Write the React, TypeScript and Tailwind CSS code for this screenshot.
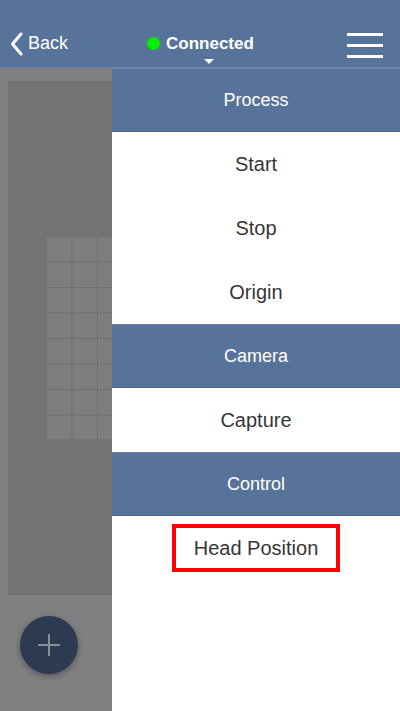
import React from "react";

const font = { fontFamily: '"Liberation Sans", Arial, sans-serif' };

function Header({ label }: { label: string }) {
  return (
    <div className="h-[64px] bg-[#587399] border-t border-t-[#6a83a6] border-b border-b-[#4a6387] flex items-center justify-center text-white text-[18px]">
      {label}
    </div>
  );
}

function Item({ label, boxed }: { label: string; boxed?: boolean }) {
  return (
    <div className="h-[64px] bg-white flex items-center justify-center text-[#363636] text-[20px]">
      {boxed ? (
        <div className="w-[168px] h-[48px] border-[4px] border-[#ff0000] flex items-center justify-center text-[20px]">
          {label}
        </div>
      ) : (
        label
      )}
    </div>
  );
}

export default function App() {
  return (
    <div className="w-[400px] h-[711px] overflow-hidden flex flex-col bg-white" style={font}>
      <div className="h-[68px] bg-[#587399] border-b border-b-[#6d86a8] flex items-center justify-between relative shrink-0">
        <div className="flex items-center pl-[10px] pt-[20px] text-white text-[18px]">
          <svg width="13" height="24" viewBox="0 0 13 24" className="mr-[5px]">
            <path d="M11 2 L2.5 12 L11 22" fill="none" stroke="white" strokeWidth="3" strokeLinecap="round" strokeLinejoin="round" />
          </svg>
          <span>Back</span>
        </div>
        <div className="absolute left-[147px] top-[31px] flex flex-col items-center">
          <div className="flex items-center">
            <div className="w-[13px] h-[13px] rounded-full bg-[#00f000] mr-[6px]" />
            <span className="text-white text-[17px] font-bold">Connected</span>
          </div>
          <svg width="10" height="5" viewBox="0 0 10 5" className="ml-[18px] mt-[2px]">
            <path d="M0 0 L10 0 L5 5 Z" fill="white" />
          </svg>
        </div>
        <div className="flex flex-col gap-[8px] pr-[17px] pt-[23px]">
          <div className="w-[36px] h-[3px] bg-white" />
          <div className="w-[36px] h-[3px] bg-white" />
          <div className="w-[36px] h-[3px] bg-white" />
        </div>
      </div>
      <div className="flex flex-1">
        <div className="w-[112px] bg-[#808080] relative flex flex-col">
          <div className="mt-[13px] ml-[8px] h-[514px] bg-[#737373] relative overflow-hidden">
            <div
              className="absolute left-[39px] top-[156px] w-[80px] h-[202px] bg-[#7e7e7e]"
              style={{
                backgroundImage:
                  "linear-gradient(to right, #6f6f6f 1px, transparent 1px), linear-gradient(to bottom, #6f6f6f 1px, transparent 1px)",
                backgroundSize: "25.5px 25.5px",
                backgroundPosition: "-1px -1px",
              }}
            />
          </div>
          <div className="absolute left-[20px] top-[548px] w-[58px] h-[58px] rounded-full bg-[#2c3b51] shadow-[0_2px_6px_rgba(0,0,0,0.35)] flex items-center justify-center">
            <svg width="24" height="24" viewBox="0 0 24 24">
              <path d="M12 1 V23 M1 12 H23" stroke="#8a8f96" strokeWidth="2" />
            </svg>
          </div>
        </div>
        <div className="flex-1 flex flex-col bg-white">
          <Header label="Process" />
          <Item label="Start" />
          <Item label="Stop" />
          <Item label="Origin" />
          <Header label="Camera" />
          <Item label="Capture" />
          <Header label="Control" />
          <Item label="Head Position" boxed />
        </div>
      </div>
    </div>
  );
}
